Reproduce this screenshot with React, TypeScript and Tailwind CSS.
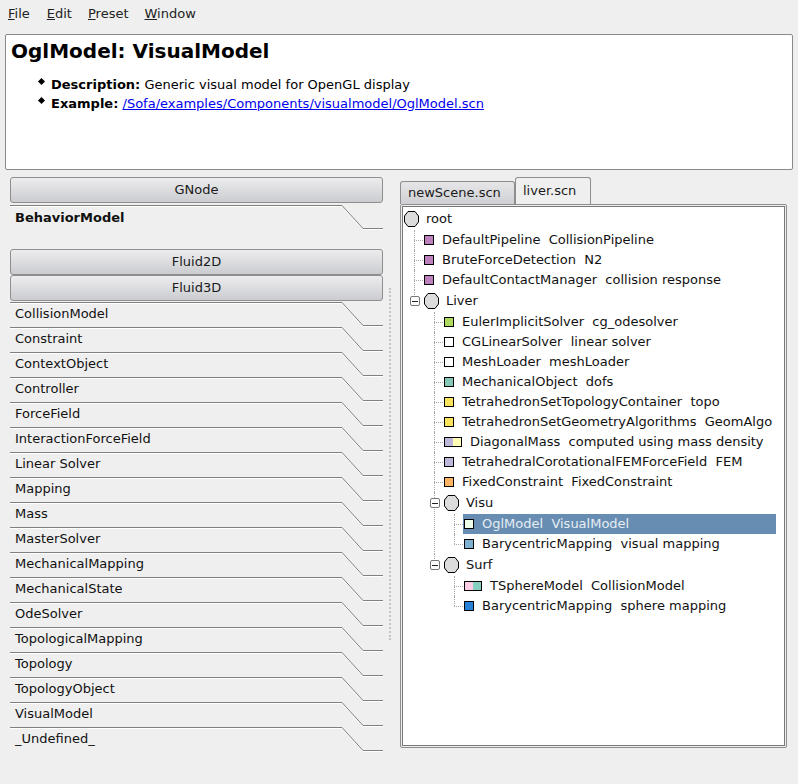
const categories = [
  "CollisionModel",
  "Constraint",
  "ContextObject",
  "Controller",
  "ForceField",
  "InteractionForceField",
  "Linear Solver",
  "Mapping",
  "Mass",
  "MasterSolver",
  "MechanicalMapping",
  "MechanicalState",
  "OdeSolver",
  "TopologicalMapping",
  "Topology",
  "TopologyObject",
  "VisualModel",
  "_Undefined_",
];

type TreeItem = {
  label: string;
  colors?: string[];
  selected?: boolean;
  children?: TreeItem[];
};

const liver: TreeItem = {
  label: "Liver",
  children: [
    { label: "EulerImplicitSolver  cg_odesolver", colors: ["bg-[#b0d95f]"] },
    { label: "CGLinearSolver  linear solver", colors: ["bg-white"] },
    { label: "MeshLoader  meshLoader", colors: ["bg-white"] },
    { label: "MechanicalObject  dofs", colors: ["bg-[#85c7b8]"] },
    { label: "TetrahedronSetTopologyContainer  topo", colors: ["bg-[#fce35c]"] },
    { label: "TetrahedronSetGeometryAlgorithms  GeomAlgo", colors: ["bg-[#fce35c]"] },
    { label: "DiagonalMass  computed using mass density", colors: ["bg-[#bdb8d9]", "bg-[#fdfdb5]"] },
    { label: "TetrahedralCorotationalFEMForceField  FEM", colors: ["bg-[#bdb8d9]"] },
    { label: "FixedConstraint  FixedConstraint", colors: ["bg-[#fdb462]"] },
    {
      label: "Visu",
      children: [
        { label: "OglModel  VisualModel", colors: ["bg-[#edfde8]"], selected: true },
        { label: "BarycentricMapping  visual mapping", colors: ["bg-[#7eb0d3]"] },
      ],
    },
    {
      label: "Surf",
      children: [
        { label: "TSphereModel  CollisionModel", colors: ["bg-[#fccde5]", "bg-[#85cfc0]"] },
        { label: "BarycentricMapping  sphere mapping", colors: ["bg-[#2a82d8]"] },
      ],
    },
  ],
};

const rootItems: TreeItem[] = [
  { label: "DefaultPipeline  CollisionPipeline", colors: ["bg-[#bc80bd]"] },
  { label: "BruteForceDetection  N2", colors: ["bg-[#bc80bd]"] },
  { label: "DefaultContactManager  collision response", colors: ["bg-[#bc80bd]"] },
  liver,
];

function NodeIcon() {
  return (
    <svg width="15" height="16" viewBox="0 0 15 16" className="shrink-0">
      <path d="M4 .5H11L14.5 5V11L11 15.5H4L.5 11V5Z" fill="#dcdcdc" stroke="#000" />
    </svg>
  );
}

function Swatch({ colors }: { colors: string[] }) {
  return (
    <span className="flex h-[10px] shrink-0 border border-black">
      {colors.map((c) => (
        <span key={c} className={`h-full w-[8px] ${c}`} />
      ))}
    </span>
  );
}

function Branch({ item, last }: { item: TreeItem; last: boolean }) {
  const guide = "absolute left-0 top-0 border-l border-dotted border-[#a8a8a8]";
  if (item.children) {
    return (
      <div className="relative">
        <span className={`${guide} ${last ? "h-[11px]" : "h-full"}`} />
        <div className="relative flex h-[22px] items-center pl-[10px]">
          <span className="absolute left-[-4px] top-[6px] flex h-[10px] w-[10px] items-center justify-center rounded-[2px] border border-[#777] bg-white">
            <span className="h-px w-[6px] bg-[#222]" />
          </span>
          <NodeIcon />
          <span className="ml-[7px] whitespace-pre">{item.label}</span>
        </div>
        <div className="ml-[20px]">
          {item.children.map((c, i) => (
            <Branch key={c.label} item={c} last={i === item.children!.length - 1} />
          ))}
        </div>
      </div>
    );
  }
  return (
    <div className="relative flex h-[20px] items-center">
      <span className={`${guide} ${last ? "h-[10px]" : "h-full"}`} />
      <span className="absolute left-0 top-[10px] w-[9px] border-t border-dotted border-[#a8a8a8]" />
      <div
        className={`ml-[9px] flex h-full flex-1 items-center pl-px ${
          item.selected ? "bg-[#678db2] text-[#e6edf4]" : ""
        }`}
      >
        <Swatch colors={item.colors ?? []} />
        <span className="ml-[8px] whitespace-pre">{item.label}</span>
      </div>
    </div>
  );
}

function GradientButton({ label }: { label: string }) {
  return (
    <button className="h-[26px] w-full rounded-[3px] border border-[#8e8e8e] bg-gradient-to-b from-[#ededef] to-[#cbccd0] text-center text-[13px] leading-[24px] text-[#1a1a1a]">
      {label}
    </button>
  );
}

function Category({ label, bold }: { label: string; bold?: boolean }) {
  return (
    <div className={`relative h-[25px] pl-[5px] leading-[17px] ${bold ? "pt-[4px]" : "pt-[3px]"}`}>
      <svg width="373" height="25" viewBox="0 0 373 25" className="absolute left-0 top-0">
        <path d="M0 1.5H332L353 24.5H373" fill="none" stroke="#fff" />
        <path d="M0 .5H332L353 23.5H373" fill="none" stroke="#808080" />
      </svg>
      <span className={`relative ${bold ? "font-bold" : ""}`}>{label}</span>
    </div>
  );
}

function Bullet() {
  return <span className="mt-[4px] h-[5px] w-[5px] shrink-0 rotate-45 bg-black" />;
}

export default function App() {
  return (
    <div className="flex h-[784px] w-[798px] flex-col overflow-hidden bg-[#efefef] font-['DejaVu_Sans',sans-serif] text-[13px] text-[#111]">
      {/* Menu */}
      <div className="flex h-[34px] shrink-0 gap-[16px] pl-[8px] pt-[5px] leading-[17px] text-[#222]">
        <span className="mr-px"><span className="underline">F</span>ile</span>
        <span><span className="underline">E</span>dit</span>
        <span><span className="underline">P</span>reset</span>
        <span><span className="underline">W</span>indow</span>
      </div>

      {/* Description */}
      <div className="mx-[5px] h-[136px] shrink-0 rounded-[2px] border border-[#8a8a8a] bg-white px-[5px] pt-[3px]">
        <h1 className="text-[20px] font-bold leading-[26px] text-black">OglModel: VisualModel</h1>
        <div className="mt-[11px] pl-[28px] leading-[19px] text-black">
          <div className="flex gap-[7px]">
            <Bullet />
            <p>
              <b>Description:</b> Generic visual model for OpenGL display
            </p>
          </div>
          <div className="flex gap-[7px]">
            <Bullet />
            <p>
              <b>Example:</b>{" "}
              <a className="text-[#0000ee] underline">/Sofa/examples/Components/visualmodel/OglModel.scn</a>
            </p>
          </div>
        </div>
      </div>

      <div className="flex flex-1 pl-[10px]">
        {/* Library */}
        <div className="w-[373px] pt-[7px]">
          <GradientButton label="GNode" />
          <div className="mt-[2px] h-[44px]">
            <Category label="BehaviorModel" bold />
          </div>
          <div className="flex flex-col">
            <GradientButton label="Fluid2D" />
            <GradientButton label="Fluid3D" />
          </div>
          <div className="mt-px">
            {categories.map((c) => (
              <Category key={c} label={c} />
            ))}
          </div>
        </div>

        {/* Splitter */}
        <div className="w-[17px] pl-[6px] pt-[118px]">
          <div className="h-[352px] w-0 border-l-2 border-dotted border-[#c4c4c4]" />
        </div>

        {/* Scene tabs */}
        <div className="w-[387px] pt-[7px]">
          <div className="flex h-[27px] items-end">
            <div className="h-[23px] w-[115px] rounded-t-[3px] border border-b-0 border-[#8e8e8e] bg-gradient-to-b from-[#e6e6e8] to-[#cfd0d4] pl-[7px] leading-[21px] text-[#1a1a1a]">
              newScene.scn
            </div>
            <div className="h-[27px] w-[76px] rounded-t-[3px] border border-b-0 border-[#8e8e8e] bg-[#efefef] pl-[7px] pt-[2px] leading-[22px] text-[#1a1a1a]">
              liver.scn
            </div>
          </div>
          <div className="h-[544px] rounded-[2px] border border-[#8e8e8e] p-px">
            <div className="h-full border border-[#777] bg-white pr-[8px] pt-px">
              <div className="flex h-[22px] items-center pl-px">
                <NodeIcon />
                <span className="ml-[7px]">root</span>
              </div>
              <div className="ml-[11px]">
                {rootItems.map((item, i) => (
                  <Branch key={item.label} item={item} last={i === rootItems.length - 1} />
                ))}
              </div>
            </div>
          </div>
        </div>
      </div>
    </div>
  );
}
